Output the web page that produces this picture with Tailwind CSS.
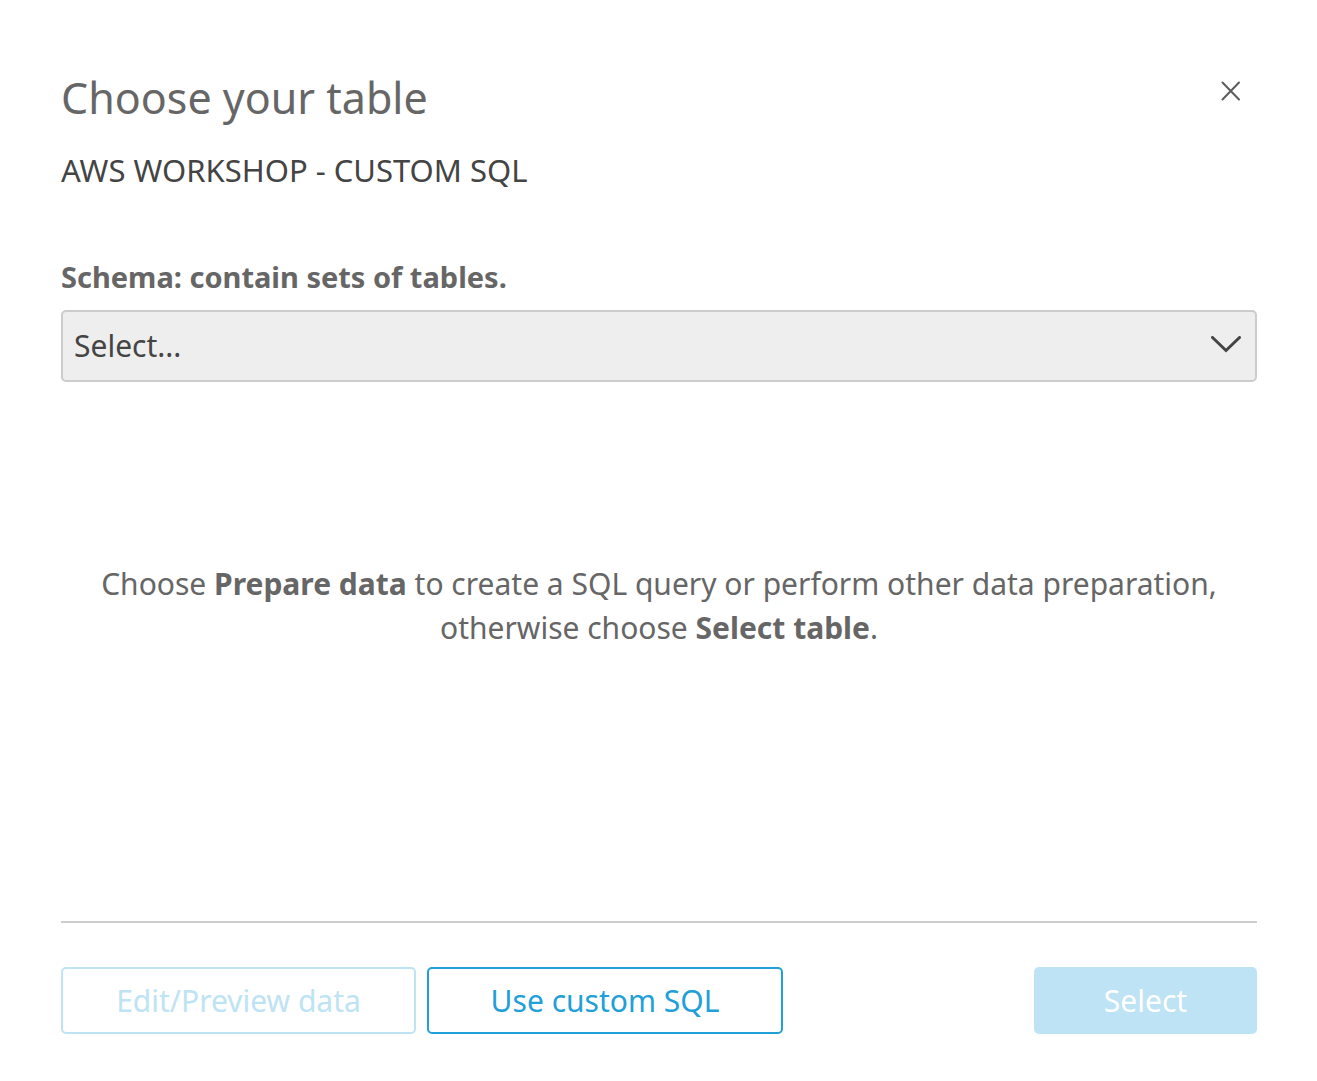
<!DOCTYPE html>
<html lang="en">
<head>
<meta charset="utf-8">
<title>Choose your table</title>
<script src="https://cdn.jsdelivr.net/npm/@tailwindcss/browser@4"></script>
</head>
<body class="bg-white font-['Noto_Sans',sans-serif] text-[30px] leading-[44px] text-[#666]">
<main role="dialog" aria-labelledby="title" class="flex min-h-screen flex-col pt-[66px] pr-[60px] pb-[47px] pl-[61px]">
  <header class="flex items-start justify-between">
    <h1 id="title" class="text-[43px] leading-[64px]">Choose your table</h1>
    <button type="button" aria-label="Close" class="mt-[15px] mr-4 flex size-5 items-center justify-center text-[#5c5c5c]">
      <svg class="size-5" viewBox="0 0 20 20" fill="none" stroke="currentColor" stroke-width="2" stroke-linecap="round"><path d="M1.5 1.500 18 18.500M18 1.500 1.500 18.500"/></svg>
    </button>
  </header>
  <p class="mt-[18px] text-[31px] text-[#444]">AWS WORKSHOP - CUSTOM SQL</p>
  <label for="schema" class="mt-[63px] text-[29px] font-bold">Schema: contain sets of tables.</label>
  <div class="mt-[11px] grid items-center">
    <select id="schema" class="col-start-1 row-start-1 h-[72px] w-full appearance-none rounded-[5px] border-2 border-[#ccc] bg-[#eee] px-[11px] text-[#444]"><option>Select...</option></select>
    <svg class="pointer-events-none col-start-1 row-start-1 mr-4 h-5 w-[30px] justify-self-end text-[#444]" viewBox="0 0 30 20" fill="none" stroke="currentColor" stroke-width="3" stroke-linecap="round"><path d="M1.500 1.500 15 14.500 28.500 1.500"/></svg>
  </div>
  <p class="flex-1 pt-[180px] text-center">Choose <b>Prepare data</b> to create a SQL query or perform other data preparation, otherwise choose <b>Select table</b>.</p>
  <footer class="flex gap-[11px] border-t-2 border-[#ccc] pt-11">
    <button type="button" disabled class="h-[67px] w-[355px] rounded-[5px] border-2 border-[#bde3f4] text-[#bde3f4]">Edit/Preview data</button>
    <button type="button" class="h-[67px] w-[356px] rounded-[5px] border-2 border-[#219fd8] text-[#219fd8]">Use custom SQL</button>
    <button type="button" disabled class="ml-auto h-[67px] w-[223px] rounded-[5px] bg-[#bde3f4] text-white">Select</button>
  </footer>
</main>
</body>
</html>
